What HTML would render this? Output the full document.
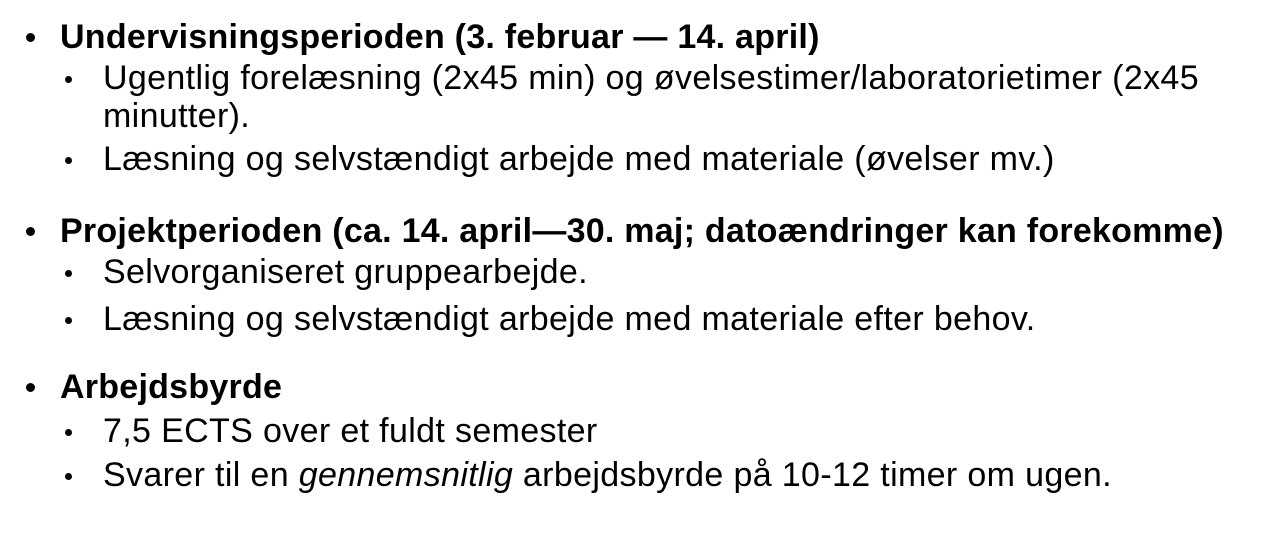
<!DOCTYPE html>
<html><head><meta charset="utf-8"><style>
html,body{margin:0;padding:0;background:#fff;}
body{width:1276px;height:536px;position:relative;overflow:hidden;font-family:"Liberation Sans",Arial,sans-serif;color:#000;}
.l{position:absolute;white-space:nowrap;line-height:1;}
.b{font-weight:bold;font-size:34px;letter-spacing:0.25px;left:60px;}
.s{font-size:34px;letter-spacing:0.35px;left:103px;}
.d1{position:absolute;left:26px;width:9px;height:9px;border-radius:50%;background:#000;}
.d2{position:absolute;left:65px;width:7px;height:7px;border-radius:50%;background:#000;}
</style></head><body>
<div class="d1" style="top:33px"></div><div class="l b" style="top:20px">Undervisningsperioden (3. februar — 14. april)</div>
<div class="d2" style="top:76px"></div><div class="l s" style="top:61px">Ugentlig forelæsning (2x45 min) og øvelsestimer/laboratorietimer (2x45</div>
<div class="l s" style="top:99px">minutter).</div>
<div class="d2" style="top:157px"></div><div class="l s" style="top:142px">Læsning og selvstændigt arbejde med materiale (øvelser mv.)</div>

<div class="d1" style="top:227px"></div><div class="l b" style="top:214px">Projektperioden (ca. 14. april—30. maj; datoændringer kan forekomme)</div>
<div class="d2" style="top:270px"></div><div class="l s" style="top:255px">Selvorganiseret gruppearbejde.</div>
<div class="d2" style="top:317px"></div><div class="l s" style="top:302px">Læsning og selvstændigt arbejde med materiale efter behov.</div>

<div class="d1" style="top:383px"></div><div class="l b" style="top:370px">Arbejdsbyrde</div>
<div class="d2" style="top:429px"></div><div class="l s" style="top:414px">7,5 ECTS over et fuldt semester</div>
<div class="d2" style="top:473px"></div><div class="l s" style="top:458px">Svarer til en <i>gennemsnitlig</i> arbejdsbyrde på 10-12 timer om ugen.</div>
</body></html>
